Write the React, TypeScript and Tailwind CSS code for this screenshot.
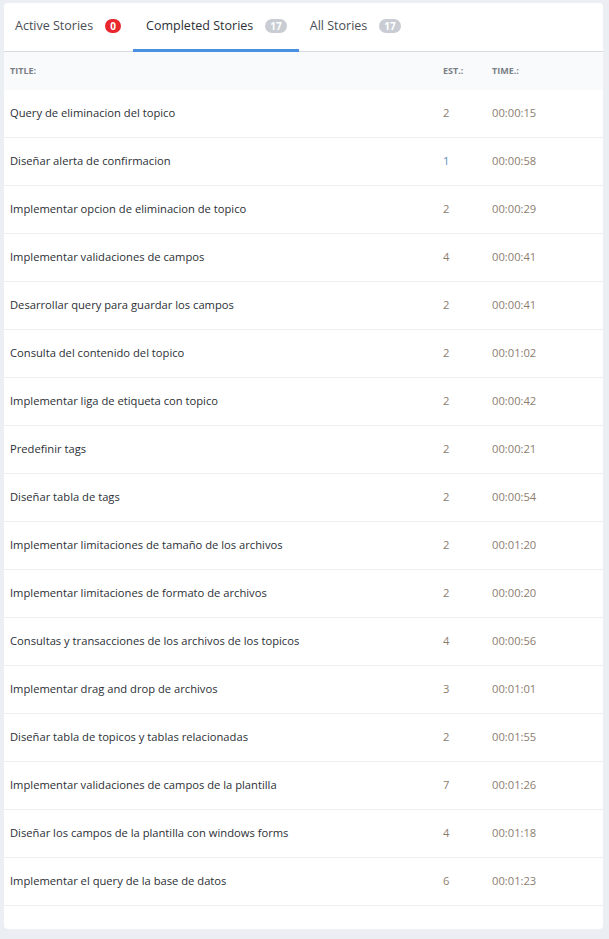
const stories = [
  { title: 'Query de eliminacion del topico', est: 2, time: '00:00:15' },
  { title: 'Diseñar alerta de confirmacion', est: 1, time: '00:00:58' },
  { title: 'Implementar opcion de eliminacion de topico', est: 2, time: '00:00:29' },
  { title: 'Implementar validaciones de campos', est: 4, time: '00:00:41' },
  { title: 'Desarrollar query para guardar los campos', est: 2, time: '00:00:41' },
  { title: 'Consulta del contenido del topico', est: 2, time: '00:01:02' },
  { title: 'Implementar liga de etiqueta con topico', est: 2, time: '00:00:42' },
  { title: 'Predefinir tags', est: 2, time: '00:00:21' },
  { title: 'Diseñar tabla de tags', est: 2, time: '00:00:54' },
  { title: 'Implementar limitaciones de tamaño de los archivos', est: 2, time: '00:01:20' },
  { title: 'Implementar limitaciones de formato de archivos', est: 2, time: '00:00:20' },
  { title: 'Consultas y transacciones de los archivos de los topicos', est: 4, time: '00:00:56' },
  { title: 'Implementar drag and drop de archivos', est: 3, time: '00:01:01' },
  { title: 'Diseñar tabla de topicos y tablas relacionadas', est: 2, time: '00:01:55' },
  { title: 'Implementar validaciones de campos de la plantilla', est: 7, time: '00:01:26' },
  { title: 'Diseñar los campos de la plantilla con windows forms', est: 4, time: '00:01:18' },
  { title: 'Implementar el query de la base de datos', est: 6, time: '00:01:23' },
]

const tabs = [
  { label: 'Active Stories', count: 0, active: false, badge: 'bg-[#e8262d] text-white' },
  { label: 'Completed Stories', count: 17, active: true, badge: 'bg-[#c9cdd3] text-white' },
  { label: 'All Stories', count: 17, active: false, badge: 'bg-[#c9cdd3] text-white' },
]

const App = () => {
  return (
    <div className="min-h-[939px] bg-[#ebeff4] px-1 pb-[11px] pt-[3px] font-['Open_Sans',sans-serif]">
      <div className="w-[599px] overflow-hidden rounded bg-white pb-[23px]">
        <div className="flex h-[49px] border-b border-[#d7dbe0]">
          {tabs.map((tab) => (
            <div
              key={tab.label}
              className={
                'flex h-[49px] items-center gap-3 pl-[11px] pr-3 ' +
                (tab.active ? 'border-b-[3px] border-[#4a90e2] pl-[13px] text-[#2d3136]' : 'pb-[3px] text-[#4a4e54]')
              }
            >
              <span className="text-[12.5px]">{tab.label}</span>
              <span className={'flex h-[14px] min-w-[16px] items-center justify-center rounded-full px-[5px] text-[10px] font-bold ' + tab.badge}>
                {tab.count}
              </span>
            </div>
          ))}
        </div>
        <div className="flex h-[38px] items-center bg-[#f9fafc] text-[9px] font-bold text-[#7b7f86]">
          <span className="pl-[6px]">TITLE:</span>
          <span className="ml-auto w-[49px]">EST.:</span>
          <span className="w-[111px]">TIME.:</span>
        </div>
        {stories.map((s) => (
          <div key={s.title} className="flex h-[48px] items-center border-b border-[#eceef1] text-[11.2px]">
            <span className="pl-[6px] text-[#2b2f35]">{s.title}</span>
            <span className={'ml-auto w-[49px] ' + (s.est === 1 ? 'text-[#5b8cc0]' : 'text-[#8c7e6f]')}>{s.est}</span>
            <span className="w-[111px] text-[#8c7e6f]">{s.time}</span>
          </div>
        ))}
      </div>
    </div>
  )
}

export default App
